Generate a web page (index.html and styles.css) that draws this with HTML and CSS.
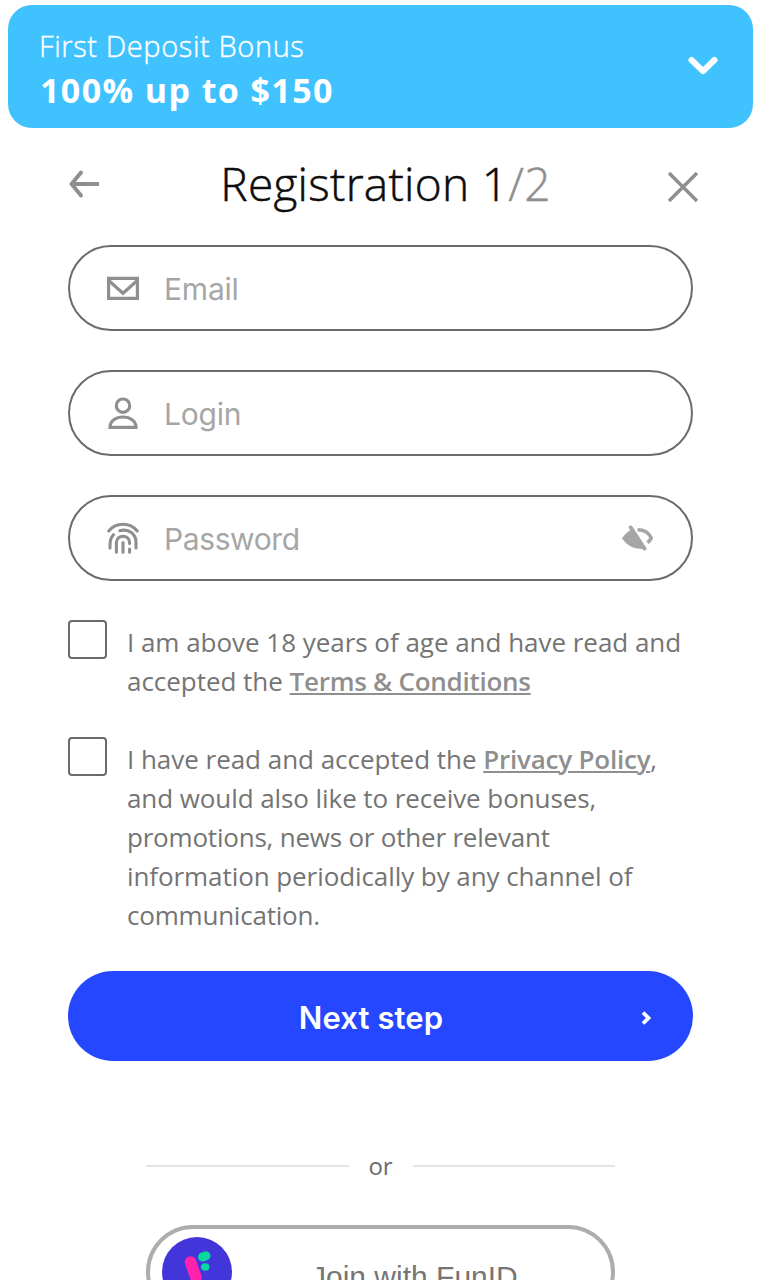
FILE: index.html
```html
<!DOCTYPE html>
<html lang="en">
<head>
<meta charset="utf-8">
<title>Registration</title>
<link rel="stylesheet" href="styles.css">
</head>
<body>
<section class="bonus">
  <div>
    <div class="bonus-label">First Deposit Bonus</div>
    <div class="bonus-value">100% up to $150</div>
  </div>
  <svg class="bonus-chevron" width="30" height="20" viewBox="0 0 30 20"><path d="M3.500 4L15 15.200 26.500 4" fill="none" stroke="#fff" stroke-width="6" stroke-linecap="round" stroke-linejoin="round"/></svg>
</section>
<main class="panel">
  <header class="head">
    <svg class="back" width="32" height="32" viewBox="0 0 32 32" fill="none" stroke="#8f8f8f" stroke-width="4" stroke-linecap="round" stroke-linejoin="round"><path d="M13 4.500L3.500 16 13 27.500" /><path d="M4 16H31" stroke-linecap="butt"/></svg>
    <h1 class="title">Registration 1<span class="total">/2</span></h1>
    <svg class="close" width="32" height="32" viewBox="0 0 32 32" stroke="#8f8f8f" stroke-width="3.500"><path d="M2 2L30 30M30 2L2 30"/></svg>
  </header>
  <form class="form">
    <div class="field">
      <svg width="32" height="32" viewBox="0 0 32 32" fill="none" stroke="#8f8f8f" stroke-width="3.200"><path d="M1.600 6.400H30.400V26.400H1.600Z"/><path d="M2 8.800L16 21.300 30 8.800"/></svg>
      <span class="placeholder">Email</span>
    </div>
    <div class="field">
      <svg width="32" height="32" viewBox="0 0 32 32" fill="none" stroke="#8f8f8f" stroke-width="3.200"><circle cx="16" cy="8.700" r="6.700"/><path d="M3 30.300C3 23.800 9 20 16 20S29 23.800 29 30.300Z"/></svg>
      <span class="placeholder">Login</span>
    </div>
    <div class="field">
      <svg width="32" height="32" viewBox="0 0 32 32" fill="none" stroke="#8f8f8f" stroke-width="3.100" stroke-linecap="round"><path d="M1.800 9C9 0 23 0 30.200 9"/><path d="M12.800 8.700C22 6.200 29 12.200 29 20.200V26"/><path d="M6.500 12.700C3.500 16.200 3 18.200 3 26"/><path d="M9.400 30.300V20.700C9.400 12.200 22.600 12.200 22.600 20.700V21.500"/><path d="M16 20.500V30.300M22.600 27V30.300"/></svg>
      <span class="placeholder password">Password</span>
      <svg class="eye" width="32" height="26" viewBox="0 0 32 26"><path d="M8.800 4.500L22 24C12 24.500 5 20.500 0 13.500 2 10 5 7.500 8.800 4.500Z" fill="#a6a6a6"/><path d="M8.800 2.500L22.500 23.500" stroke="#a6a6a6" stroke-width="4" stroke-linecap="round"/><path d="M15.500 4.700C22 4.700 27 8 29.200 13 28.300 15 27 16.500 25.500 17.700" fill="none" stroke="#a6a6a6" stroke-width="3.600"/></svg>
    </div>
    <div class="consent">
      <span class="box"></span>
      <p class="copy">I am above 18 years of age and have read and<br>accepted the <a class="link terms">Terms &amp; Conditions</a></p>
    </div>
    <div class="consent">
      <span class="box"></span>
      <p class="copy">I have read and accepted the <a class="link">Privacy Policy</a>,<br><span class="snug">and would also like to receive bonuses,</span><br><span class="tight">promotions, news or other relevant</span><br><span class="snug">information periodically by any channel of</span><br><span class="tight">communication.</span></p>
    </div>
    <button class="next" type="button"><span class="next-label">Next step</span><svg width="12" height="16" viewBox="0 0 12 16"><path d="M2 2.500L7.500 8 2 13.500" fill="none" stroke="#fff" stroke-width="3.800"/></svg></button>
  </form>
  <div class="divider"><span class="or">or</span></div>
  <button class="funid" type="button">
    <svg width="70" height="70" viewBox="0 0 70 70"><circle cx="35" cy="35" r="35" fill="#4236db"/><path d="M28.500 25L34 40.500" stroke="#ff22ac" stroke-width="11.500" stroke-linecap="round"/><path d="M40.500 20L44 18.800" stroke="#08d8a0" stroke-width="9" stroke-linecap="round"/><ellipse cx="43.200" cy="30" rx="4.200" ry="3.700" fill="#08d8a0"/></svg>
    <span class="funid-label">Join with FunID</span>
  </button>
</main>
</body>
</html>
```
FILE: styles.css
```css
* { box-sizing: border-box; }
html { overflow: hidden; }
body { margin: 0; height: 1280px; overflow: hidden; background: #fff; font-family: "Open Sans", sans-serif; }
svg { display: block; flex: none; }
button { padding: 0; font: inherit; }
.bonus { margin: 5px 8px 0; height: 123px; padding: 19px 35px 0 31px; border-radius: 24px; background: #40c2ff; color: #fff; display: flex; justify-content: space-between; }
.bonus-label { font-size: 29px; line-height: 43px; font-weight: 300; letter-spacing: .6px; -webkit-text-stroke: .4px currentColor; }
.bonus-value { padding: 2px 0 0 1px; font-size: 34px; line-height: 43px; font-weight: 700; letter-spacing: 1.4px; }
.bonus-chevron { margin-top: 32px; }
.panel { padding: 0 68px; display: flex; flex-direction: column; }
.head { height: 117px; display: flex; align-items: center; justify-content: space-between; }
.back { margin-top: -5px; }
.title { margin: -7px 0 0; padding-left: 4px; font-size: 46px; line-height: 60px; font-weight: 300; letter-spacing: .27px; color: #0c0c0c; white-space: nowrap; -webkit-text-stroke: .5px currentColor; }
.total { color: #8f8f8f; }
.close { margin-right: -6px; }
.form { display: flex; flex-direction: column; }
.field { height: 86px; margin-bottom: 39px; border: 2px solid #6b6b6b; border-radius: 43px; padding: 0 37px 0 37px; display: flex; align-items: center; }
.placeholder { flex: 1; margin-left: 25px; padding-top: 2px; font: 400 30px/40px Inter, sans-serif; letter-spacing: -.2px; color: #a6a6a6; }
.password { letter-spacing: -.4px; }
.consent { display: flex; gap: 20px; margin-bottom: 39px; }
.box { width: 39px; height: 39px; border: 2px solid #6b6b6b; border-radius: 4px; flex: none; }
.copy { margin: 3px 0 -3px; font-size: 26px; line-height: 39px; letter-spacing: -.03px; color: #747474; white-space: nowrap; }
.snug { letter-spacing: -.08px; }
.tight { letter-spacing: -.21px; }
.link { color: #8f8f8f; font-weight: 600; letter-spacing: -.22px; text-decoration: underline; text-decoration-thickness: 2px; text-underline-offset: 2px; }
.terms { letter-spacing: -.27px; }
.next { height: 90px; border: 0; border-radius: 45px; background: #2547ff; color: #fff; display: grid; grid-template-columns: 1fr 12px; align-items: center; padding: 3px 40px 0 33px; }
.next-label { font: 600 31px/40px Inter, sans-serif; letter-spacing: .1px; }
.divider { margin: 85px 78px 0; height: 40px; display: flex; align-items: center; gap: 19px; font-size: 24px; color: #6b6b6b; }
.divider::before, .divider::after { content: ""; flex: 1; height: 2px; background: #e4e4e4; }
.or { width: 26px; line-height: 40px; text-align: center; }
.funid { height: 94px; margin: 39px 78px 0; border: 4px solid #adadad; border-radius: 47px; background: #fff; display: flex; align-items: center; padding-left: 12px; }
.funid-label { margin-left: 79px; padding-top: 9px; font: 400 30px/40px "Liberation Sans", sans-serif; color: #757575; }
```
